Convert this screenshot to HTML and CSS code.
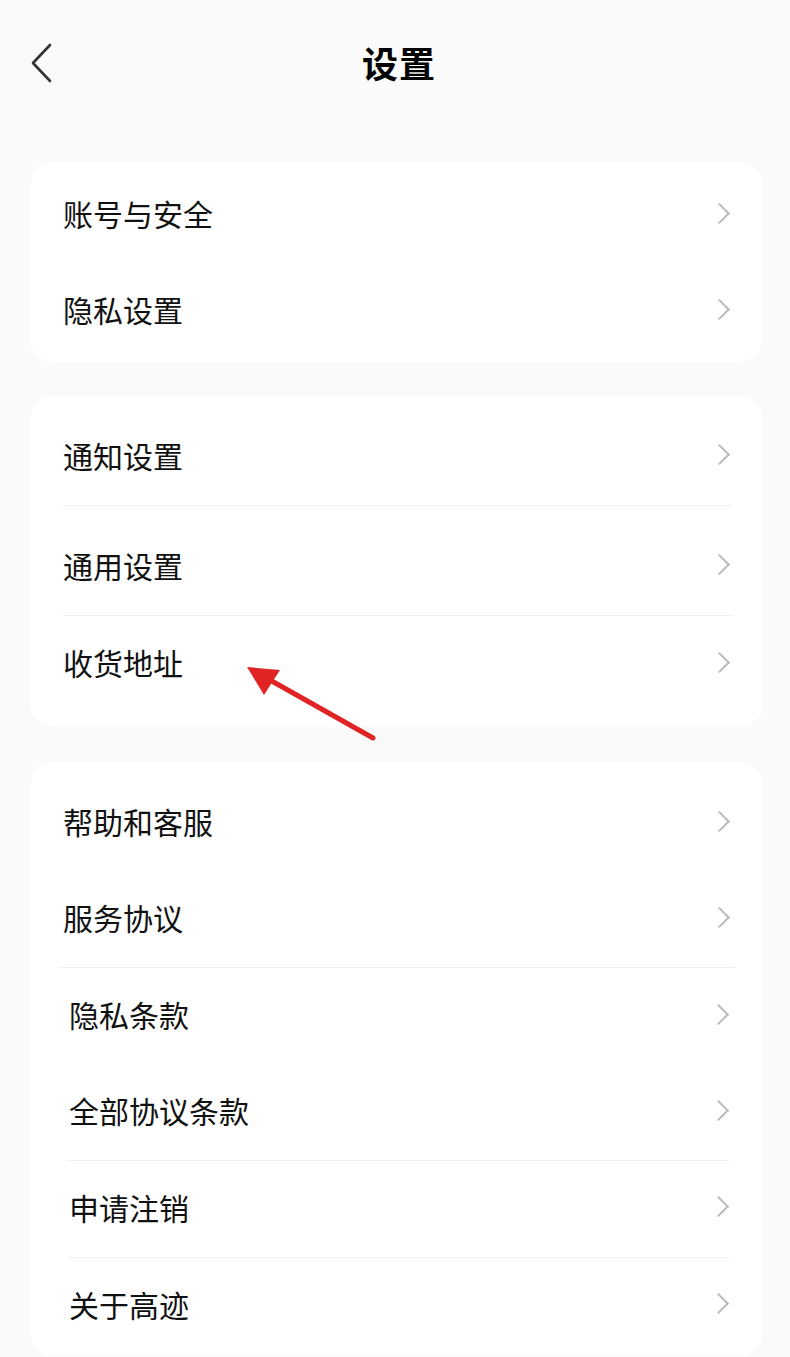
FILE: index.html
```html
<!DOCTYPE html>
<html lang="zh-CN">
<head>
    <meta charset="UTF-8">
    <meta name="viewport" content="width=device-width, initial-scale=1.0">
    <title>设置</title>
    <link rel="stylesheet" href="styles.css">
</head>
<body>
<div class="page">
    <header class="topbar">
        <a class="back" href="#" aria-label="返回">
            <svg width="24" height="42" viewBox="0 0 24 42">
                <path d="M20 3 L3 21 L20 39" fill="none" stroke="#333" stroke-width="2.6" stroke-linecap="round" stroke-linejoin="round"/>
            </svg>
        </a>
        <h1>设置</h1>
        <span></span>
    </header>

    <div class="card card-first">
        <a class="row" href="#"><span>账号与安全</span><i class="chev"></i></a>
        <a class="row" href="#"><span>隐私设置</span><i class="chev"></i></a>
    </div>

    <div class="card card-second">
        <a class="row tall line" href="#"><span>通知设置</span><i class="chev"></i></a>
        <a class="row tall line" href="#"><span>通用设置</span><i class="chev"></i></a>
        <a class="row" href="#"><span>收货地址</span><i class="chev"></i></a>
    </div>

    <div class="card card-third">
        <a class="row mid" href="#"><span>帮助和客服</span><i class="chev"></i></a>
        <a class="row mid line wide" href="#"><span>服务协议</span><i class="chev"></i></a>
        <a class="row mid inset" href="#"><span>隐私条款</span><i class="chev"></i></a>
        <a class="row mid inset line" href="#"><span>全部协议条款</span><i class="chev"></i></a>
        <a class="row mid inset line" href="#"><span>申请注销</span><i class="chev"></i></a>
        <a class="row mid inset" href="#"><span>关于高迹</span><i class="chev"></i></a>
    </div>

    <!-- annotation arrow pointing at 收货地址 -->
    <svg class="pointer" width="140" height="95" viewBox="0 0 140 95">
        <line x1="133" y1="83" x2="30" y2="25" stroke="#e02424" stroke-width="5" stroke-linecap="round"/>
        <polygon points="7,12 40,15 24,40" fill="#e02424"/>
    </svg>
</div>
</body>
</html>
```

FILE: styles.css
```css
body {
    margin: 0;
    background-color: #fafafa;
    color: #111;
    font-family: "Noto Sans", "Noto Sans CJK SC", sans-serif;
}

.page {
    position: relative;
    min-height: 1357px;
}

/* Header */
.topbar {
    height: 130px;
    display: grid;
    grid-template-columns: 1fr auto 1fr;
    align-items: center;
    padding: 0 22px 0 30px;
}

.back {
    display: flex;
    align-items: center;
    height: 42px;
    margin-top: -4px;
}

.topbar h1 {
    margin: -6px 0 0;
    font-size: 36px;
    font-weight: 700;
    color: #000;
    letter-spacing: 1px;
}

/* Cards */
.card {
    background-color: #fff;
    border-radius: 24px;
    margin: 0 27px 34px 30px;
}

.card-first {
    margin-top: 32px;
    padding: 5px 0 3px;
}

.card-second {
    padding: 0 0 15px;
}

.card-third {
    margin-top: 35px;
    margin-bottom: 0;
    padding: 13px 0 2px;
}

.row {
    display: flex;
    align-items: center;
    justify-content: space-between;
    height: 96px;
    margin: 0 31px 0 33px;
    padding-bottom: 4px;
    color: #111;
    text-decoration: none;
    font-size: 30px;
    box-sizing: border-box;
}

.row.tall {
    height: 110px;
    padding-top: 12px;
}

.row.mid {
    height: 96.5px;
}

.row.line {
    border-bottom: 1px solid #f0f0f0;
}

.row.wide {
    margin-left: 30px;
    margin-right: 28px;
}

.row.wide span {
    margin-left: 3px;
}

.row.wide .chev {
    margin-right: 8px;
}

.row.inset {
    margin-left: 38px;
    margin-right: 34px;
}

.row.inset span {
    margin-left: 1px;
}

.row.inset .chev {
    margin-right: 3px;
}

/* Right chevron */
.chev {
    width: 15px;
    height: 15px;
    border-top: 2.2px solid #bababa;
    border-right: 2.2px solid #bababa;
    transform: rotate(45deg);
    margin-right: 5px;
    box-sizing: border-box;
}

/* Annotation */
.pointer {
    position: absolute;
    left: 240px;
    top: 655px;
}
```
